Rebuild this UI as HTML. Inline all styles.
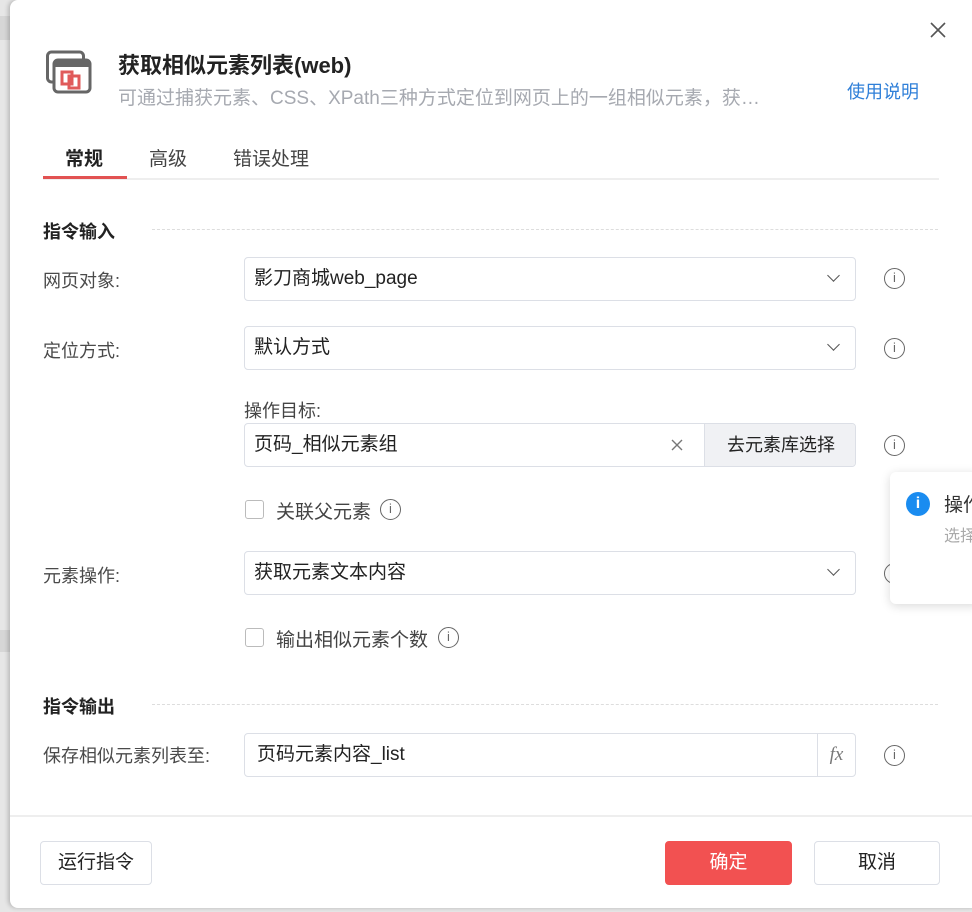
<!DOCTYPE html>
<html><head><meta charset="utf-8"><style>
*{box-sizing:border-box;margin:0;padding:0}
body{width:972px;height:912px;overflow:hidden;background:#e6e6e6;font-family:"Liberation Sans","Noto Sans CJK SC",sans-serif;position:relative;color:#333}
.dlg{position:absolute;left:10px;top:0;width:970px;height:908px;background:#fff;border-radius:8px;box-shadow:-2px 0 4px rgba(0,0,0,.2)}
.a{position:absolute}
.lbl{position:absolute;font-size:18px;color:#4a4a4a}
.inp{position:absolute;border:1px solid #dcdfe6;border-radius:4px;height:44px;font-size:19px;color:#222;padding-left:9px;line-height:42px;background:#fff}
.chev{position:absolute;right:17px;top:13px;width:9px;height:9px;border-right:1.5px solid #555;border-bottom:1.5px solid #555;transform:rotate(45deg)}
.info{position:absolute;width:21px;height:21px;border:1.5px solid #666;border-radius:50%;font-size:13px;color:#666;text-align:center;line-height:18px;font-family:"Liberation Sans",sans-serif}
.sec{position:absolute;font-size:18px;font-weight:bold;color:#222}
.dash{position:absolute;height:0;border-top:1px dashed #ddd}
.cb{position:absolute;width:19px;height:19px;border:1px solid #bbb;border-radius:3px;background:#fff}
.btn{position:absolute;border:1px solid #dcdfe6;border-radius:4px;font-size:19px;text-align:center;line-height:42px;height:44px;color:#222;background:#fff}
</style></head><body>
<div class="a" style="left:0;top:16px;width:10px;height:24px;background:#d6d6d6"></div>
<div class="a" style="left:0;top:630px;width:10px;height:22px;background:#d6d6d6"></div>
<div class="dlg">
<svg class="a" style="left:919px;top:21px" width="18" height="18" viewBox="0 0 18 18"><path d="M2 2L16 16M16 2L2 16" stroke="#555" stroke-width="1.6"/></svg>
<svg class="a" style="left:36px;top:50px" width="46" height="44" viewBox="0 0 46 44"><rect x="1.5" y="2" width="36" height="30" rx="4" fill="#fff" stroke="#666" stroke-width="3"/><rect x="8" y="10" width="36" height="32" rx="4" fill="#fff" stroke="#666" stroke-width="3"/><rect x="8" y="10" width="36" height="7" fill="#666"/><rect x="16" y="22" width="10" height="12" fill="none" stroke="#e05a5a" stroke-width="3"/><rect x="23" y="26" width="10" height="12" fill="none" stroke="#e05a5a" stroke-width="3"/></svg>
<div class="a" style="left:108px;top:48px;font-size:22px;font-weight:bold;color:#222">获取相似元素列表(web)</div>
<div class="a" style="left:108px;top:83px;font-size:19px;color:#a6a9b0;white-space:nowrap">可通过捕获元素、CSS、XPath三种方式定位到网页上的一组相似元素，获…</div>
<div class="a" style="left:837px;top:78px;font-size:18px;color:#2f7fd8">使用说明</div>
<div class="a" style="left:55px;top:144px;font-size:19px;font-weight:bold;color:#222">常规</div>
<div class="a" style="left:139px;top:144px;font-size:19px;color:#444">高级</div>
<div class="a" style="left:223px;top:144px;font-size:19px;color:#444">错误处理</div>
<div class="a" style="left:33px;top:178px;width:896px;height:2px;background:#eee"></div>
<div class="a" style="left:33px;top:176px;width:84px;height:3px;background:#e25252"></div>

<div class="sec" style="left:33px;top:218px">指令输入</div><div class="dash" style="left:142px;top:229px;width:786px"></div>
<div class="lbl" style="left:33px;top:267px">网页对象:</div>
<div class="inp" style="left:234px;top:257px;width:612px">影刀商城web_page<div class="chev"></div></div>
<div class="info" style="left:874px;top:268px">i</div>
<div class="lbl" style="left:33px;top:337px">定位方式:</div>
<div class="inp" style="left:234px;top:326px;width:612px">默认方式<div class="chev"></div></div>
<div class="info" style="left:874px;top:338px">i</div>
<div class="lbl" style="left:234px;top:397px;color:#444">操作目标:</div>
<div class="inp" style="left:234px;top:423px;width:612px;overflow:hidden">页码_相似元素组
<svg style="position:absolute;left:426px;top:15px" width="12" height="12" viewBox="0 0 12 12"><path d="M1 1L11 11M11 1L1 11" stroke="#777" stroke-width="1.4"/></svg>
<div style="position:absolute;left:459px;top:0;width:153px;height:42px;background:#f0f1f4;border-left:1px solid #dcdfe6;text-align:center;font-size:18px;color:#222">去元素库选择</div></div>
<div class="info" style="left:874px;top:435px">i</div>
<div class="cb" style="left:235px;top:500px"></div>
<div class="lbl" style="left:266px;top:497px;font-size:19px;color:#444">关联父元素</div>
<div class="info" style="left:370px;top:499px">i</div>
<div class="lbl" style="left:33px;top:562px">元素操作:</div>
<div class="inp" style="left:234px;top:551px;width:612px">获取元素文本内容<div class="chev"></div></div>
<div class="info" style="left:874px;top:563px">i</div>
<div class="cb" style="left:235px;top:628px"></div>
<div class="lbl" style="left:266px;top:625px;font-size:19px;color:#444">输出相似元素个数</div>
<div class="info" style="left:428px;top:627px">i</div>

<div class="sec" style="left:33px;top:693px">指令输出</div><div class="dash" style="left:142px;top:704px;width:786px"></div>
<div class="lbl" style="left:33px;top:742px">保存相似元素列表至:</div>
<div class="inp" style="left:234px;top:733px;width:612px;padding-left:12px">页码元素内容_list
<div style="position:absolute;right:0;top:0;width:38px;height:42px;border-left:1px solid #dcdfe6;font-family:'Liberation Serif',serif;font-style:italic;color:#777;text-align:center;font-size:19px">fx</div></div>
<div class="info" style="left:874px;top:745px">i</div>

<div class="a" style="left:0;top:815px;width:962px;height:2px;background:#eee"></div>
<div class="btn" style="left:30px;top:841px;width:112px">运行指令</div>
<div class="btn" style="left:655px;top:841px;width:127px;background:#f25151;border-color:#f25151;color:#fff">确定</div>
<div class="btn" style="left:804px;top:841px;width:126px">取消</div>

<div class="a" style="left:880px;top:472px;width:90px;height:132px;background:#fff;border-radius:6px;box-shadow:0 2px 10px rgba(0,0,0,.15)">
<div class="a" style="left:16px;top:20px;width:24px;height:24px;border-radius:50%;background:#1a8cf0;color:#fff;text-align:center;font-weight:bold;font-size:16px;line-height:24px">i</div>
<div class="a" style="left:54px;top:18px;font-size:19px;color:#333;white-space:nowrap">操作</div>
<div class="a" style="left:54px;top:50px;font-size:16px;color:#aaa;white-space:nowrap">选择</div>
</div>
</div>
</body></html>
